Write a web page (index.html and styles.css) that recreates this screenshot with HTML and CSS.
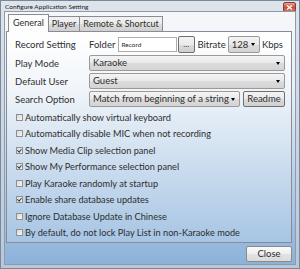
FILE: index.html
```html
<!DOCTYPE html>
<html>
<head>
    <meta charset="UTF-8">
    <title>Configure Application Setting</title>
    <link rel="stylesheet" href="styles.css">
</head>
<body>
    <div class="window">
        <div class="titlebar">
            <span class="title">Configure Application Setting</span>
            <span class="close-x">
                <svg width="7" height="5" viewBox="0 0 7 5"><path d="M1 0.5 L6 4.5 M6 0.5 L1 4.5" stroke="#fff" stroke-width="1.3"/></svg>
            </span>
        </div>
        <div class="client">
            <div class="tabs">
                <div class="tab active">General</div>
                <div class="tab">Player</div>
                <div class="tab">Remote &amp; Shortcut</div>
            </div>
            <div class="panel">
                <div class="row">
                    <label class="caption">Record Setting</label>
                    <span class="text folder">Folder</span>
                    <span class="textbox">Record</span>
                    <span class="btn dots">...</span>
                    <span class="text bitrate">Bitrate</span>
                    <span class="combo small">128<span class="arrow"></span></span>
                    <span class="text">Kbps</span>
                </div>
                <div class="row">
                    <label class="caption">Play Mode</label>
                    <span class="combo wide">Karaoke<span class="arrow"></span></span>
                </div>
                <div class="row">
                    <label class="caption">Default User</label>
                    <span class="combo wide">Guest<span class="arrow"></span></span>
                </div>
                <div class="row">
                    <label class="caption">Search Option</label>
                    <span class="combo wide">Match from beginning of a string<span class="arrow"></span></span>
                    <span class="btn readme">Readme</span>
                </div>
                <!-- option checkboxes -->
                <div class="checks">
                    <div class="check"><span class="box"></span>Automatically show virtual keyboard</div>
                    <div class="check"><span class="box"></span>Automatically disable MIC when not recording</div>
                    <div class="check"><span class="box on"></span>Show Media Clip selection panel</div>
                    <div class="check"><span class="box on"></span>Show My Performance selection panel</div>
                    <div class="check"><span class="box"></span>Play Karaoke randomly at startup</div>
                    <div class="check"><span class="box on"></span>Enable share database updates</div>
                    <div class="check"><span class="box"></span>Ignore Database Update in Chinese</div>
                    <div class="check"><span class="box"></span>By default, do not lock Play List in non-Karaoke mode</div>
                </div>
            </div>
            <div class="footer">
                <span class="btn close">Close</span>
            </div>
        </div>
    </div>
</body>
</html>
```

FILE: styles.css
```css
body {
    margin: 0;
    width: 300px;
    height: 269px;
    overflow: hidden;
    font-family: Lato, "Open Sans", sans-serif;
    font-size: 9.5px;
    color: #2e2e2e;
    white-space: nowrap;
}
.window {
    width: 300px;
    height: 269px;
    box-sizing: border-box;
    border: 1px solid #7a8899;
    background: linear-gradient(#dde4ec, #b7c8dc);
    padding: 0 3px 3px 3px;
    display: flex;
    flex-direction: column;
}
.titlebar {
    height: 10px;
    display: flex;
    align-items: center;
    justify-content: space-between;
}
.title {
    font-size: 6.5px;
    color: #222;
    padding-left: 1px;
}
.close-x {
    width: 11px;
    height: 8px;
    margin-top: 2px;
    border: 1px solid #8a3a33;
    border-radius: 2px;
    background: linear-gradient(#e8a393, #c8503a 55%, #d2705a);
    display: flex;
    align-items: center;
    justify-content: center;
}
.client {
    flex: 1;
    border: 1px solid #8d9bab;
    background: linear-gradient(#f6f7f9, #e8eef5 30%, #8cb2da);
    display: flex;
    flex-direction: column;
    padding: 2px 3px 2px 1px;
}
.tabs {
    display: flex;
    align-items: flex-end;
    padding-left: 2px;
    height: 17px;
    position: relative;
    z-index: 1;
}
.tab {
    height: 14px;
    padding: 0 3px;
    border: 1px solid #898c95;
    border-bottom: none;
    background: linear-gradient(#f2f2f2, #ebebeb 50%, #dddddd 51%, #cfcfcf);
    font-size: 9px;
    line-height: 14px;
    margin-right: -1px;
}
.tab.active {
    height: 17px;
    line-height: 16px;
    background: #fdfdfd;
    padding: 0 4px;
    margin-bottom: -1px;
}
.panel {
    flex: 1;
    border: 1px solid #898c95;
    background: linear-gradient(#ffffff, #f2f6fa 25%, #a7c5e4);
    padding: 4px 6px 0 8px;
}
.row {
    display: flex;
    align-items: center;
    height: 16px;
    margin-bottom: 2px;
}
.row:first-child {
    height: 17px;
}
.caption {
    width: 74px;
}
.text {
    margin: 0 2px;
}
.folder {
    margin-left: 2px;
    margin-right: 3px;
}
.textbox {
    width: 60px;
    height: 15px;
    box-sizing: border-box;
    border: 1px solid #abadb3;
    background: #fff;
    font-size: 6.5px;
    line-height: 13px;
    padding-left: 2px;
}
.btn {
    box-sizing: border-box;
    border: 1px solid #707070;
    border-radius: 2px;
    background: linear-gradient(#f2f2f2, #ebebeb 50%, #dddddd 51%, #cfcfcf);
    text-align: center;
}
.dots {
    width: 17px;
    height: 17px;
    line-height: 14px;
    font-size: 8px;
    margin-left: 1px;
}
.bitrate {
    margin-left: 3px;
}
.combo {
    box-sizing: border-box;
    height: 16px;
    border: 1px solid #9a9a9a;
    border-radius: 2px;
    background: linear-gradient(#f4f4f4, #e9e9e9 50%, #dcdcdc 51%, #d4d4d4);
    line-height: 14px;
    padding-left: 3px;
    display: flex;
    align-items: center;
    justify-content: space-between;
}
.combo.small {
    width: 33px;
    height: 17px;
}
.combo.wide {
    flex: 1;
}
.arrow {
    width: 0;
    height: 0;
    border-left: 2px solid transparent;
    border-right: 2px solid transparent;
    border-top: 3px solid #000;
    margin-right: 4px;
}
.readme {
    width: 42px;
    height: 16px;
    line-height: 14px;
    margin-left: 3px;
}
.check {
    display: flex;
    align-items: center;
    height: 16.5px;
    padding-left: 1px;
    font-size: 9.2px;
}
.box {
    width: 5px;
    height: 5px;
    border: 1px solid #8f8f8f;
    background: linear-gradient(135deg, #d9d9d9, #f6f6f6);
    margin-right: 2px;
    position: relative;
}
.box.on::after {
    content: "";
    position: absolute;
    left: 1px;
    top: 0;
    width: 1.5px;
    height: 3px;
    border: solid #2a3550;
    border-width: 0 1px 1px 0;
    transform: rotate(40deg);
}
.footer {
    display: flex;
    justify-content: flex-end;
    padding-top: 3px;
}
.close {
    width: 46px;
    height: 16px;
    line-height: 14px;
    border-color: #8a8a8a;
    background: linear-gradient(#fbfbfb, #eeeeee 50%, #e3e3e3 51%, #dadada);
}
```
